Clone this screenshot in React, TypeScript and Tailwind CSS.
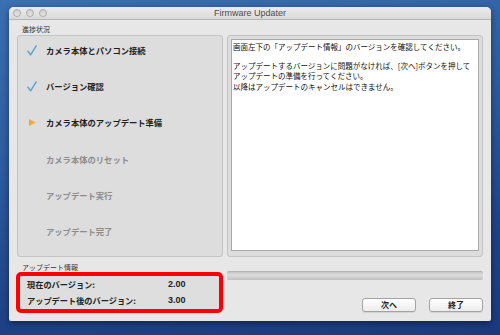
import React from "react";

const jp = { fontFamily: '"Noto Sans CJK JP", "Noto Sans", sans-serif' };
const lat = { fontFamily: '"Liberation Sans", Arial, sans-serif' };

function Check() {
  return (
    <svg width="10" height="11" viewBox="0 0 10 11" className="shrink-0">
      <path d="M1 6.2 L3.6 9.8 L9.2 0.8" fill="none" stroke="#5fa6d2" strokeWidth="1.5" strokeLinecap="round" strokeLinejoin="round" />
    </svg>
  );
}

function Tri() {
  return (
    <svg width="10" height="11" viewBox="0 0 10 11" className="shrink-0">
      <polygon points="2,2 8.5,5.5 2,9" fill="#f2a43c" />
    </svg>
  );
}

function Step({ state, label }: { state: "done" | "current" | "todo"; label: string }) {
  return (
    <div className="flex items-center h-[12px]">
      <div className="w-[18px] pl-[9px] flex items-center">
        {state === "done" ? <Check /> : state === "current" ? <Tri /> : null}
      </div>
      <span
        style={jp}
        className={`ml-[10px] text-[8.3px] leading-[12px] font-bold whitespace-nowrap ${
          state === "todo" ? "text-[#8c8c8c]" : "text-[#1e1e1e]"
        }`}
      >
        {label}
      </span>
    </div>
  );
}

function Btn({ label }: { label: string }) {
  return (
    <div
      style={jp}
      className="h-[14px] w-[54px] rounded-[3px] border border-[#a3a3a3] bg-[linear-gradient(180deg,#ffffff,#ececec)] shadow-[0_1px_0_rgba(0,0,0,0.08)] flex items-center justify-center text-[8px] font-bold text-[#222] leading-none"
    >
      {label}
    </div>
  );
}

export default function App() {
  return (
    <div className="w-[500px] h-[335px] overflow-hidden bg-[linear-gradient(170deg,#3a6fb2_0%,#2d5b9f_40%,#1f4287_75%,#1a3a7c_100%)] pt-[7px] pl-[9px]">
      <div className="w-[482px] h-[314px] rounded-t-[5px] rounded-b-[2px] bg-[#e7e7e7] shadow-[0_2px_6px_rgba(0,0,0,0.45)] flex flex-col overflow-hidden">
        {/* title bar */}
        <div className="relative h-[13px] shrink-0 bg-[linear-gradient(180deg,#ececec,#d9d9d9)] border-b border-[#b4b4b4] flex items-center">
          <div className="flex items-center gap-[5px] pl-[4px]">
            <div className="w-[8px] h-[8px] rounded-full bg-[linear-gradient(180deg,#cfcfcf,#e6e6e6)] border border-[#a9a9a9]" />
            <div className="w-[8px] h-[8px] rounded-full bg-[linear-gradient(180deg,#cfcfcf,#e6e6e6)] border border-[#a9a9a9]" />
            <div className="w-[8px] h-[8px] rounded-full bg-[linear-gradient(180deg,#cfcfcf,#e6e6e6)] border border-[#a9a9a9]" />
          </div>
          <div style={lat} className="absolute left-0 right-0 top-0 h-[13px] flex items-center justify-center text-[9px] text-[#4d4d4d] leading-none pointer-events-none">
            Firmware Updater
          </div>
        </div>

        {/* 進捗状況 label */}
        <div style={jp} className="h-[15px] shrink-0 pl-[13px] pt-[5px] text-[7px] leading-[8px] text-[#333]">
          進捗状況
        </div>

        {/* panels */}
        <div className="flex gap-[4px] pl-[8px] h-[222px] shrink-0">
          <div className="w-[206px] h-full rounded-[3px] border border-[#c3c3c3] bg-[#dddddd] flex flex-col pt-[8px] gap-[24.2px]">
            <Step state="done" label="カメラ本体とパソコン接続" />
            <Step state="done" label="バージョン確認" />
            <Step state="current" label="カメラ本体のアップデート準備" />
            <Step state="todo" label="カメラ本体のリセット" />
            <Step state="todo" label="アップデート実行" />
            <Step state="todo" label="アップデート完了" />
          </div>
          <div className="w-[256px] h-full rounded-[3px] border border-[#c3c3c3] bg-[#dddddd] p-[3px] pb-[5px]">
            <div
              style={jp}
              className="w-full h-full bg-white border border-[#a9a9a9] pl-[1px] pt-[2px] text-[7.5px] leading-[10.5px] text-[#111]"
            >
              <div className="whitespace-nowrap">画面左下の「アップデート情報」のバージョンを確認してください。</div>
              <div className="h-[8px]" />
              <div className="whitespace-nowrap">アップデートするバージョンに問題がなければ、[次へ]ボタンを押して</div>
              <div className="whitespace-nowrap">アップデートの準備を行ってください。</div>
              <div className="whitespace-nowrap">以降はアップデートのキャンセルはできません。</div>
            </div>
          </div>
        </div>

        {/* bottom */}
        <div className="flex pl-[7px] gap-[4px]">
          <div className="w-[207px] flex flex-col">
            <div style={jp} className="h-[15px] pl-[6px] pt-[6px] text-[7px] leading-[8px] text-[#333]">
              アップデート情報
            </div>
            <div className="h-[41px] rounded-[5px] border-[4px] border-[#ff0000] bg-[#dedede] flex flex-col pl-[7px] pt-[1px]">
              <div className="flex items-center h-[15px]">
                <span style={jp} className="w-[141px] text-[8.2px] font-bold text-[#222] leading-none whitespace-nowrap">現在のバージョン:</span>
                <span style={lat} className="text-[9px] font-bold text-[#222] leading-none">2.00</span>
              </div>
              <div className="flex items-center h-[17px]">
                <span style={jp} className="w-[141px] text-[8.2px] font-bold text-[#222] leading-none whitespace-nowrap">アップデート後のバージョン:</span>
                <span style={lat} className="text-[9px] font-bold text-[#222] leading-none">3.00</span>
              </div>
            </div>
          </div>
          <div className="w-[256px] flex flex-col">
            <div className="mt-[14px] h-[9px] rounded-[2px] border-t border-[#b3b3b3] bg-[linear-gradient(180deg,#c6c6c6_0%,#dcdcdc_35%,#d2d2d2_65%,#c0c0c0_100%)]" />
            <div className="mt-[18px] flex justify-end gap-[13px]">
              <Btn label="次へ" />
              <Btn label="終了" />
            </div>
          </div>
        </div>
      </div>
    </div>
  );
}
